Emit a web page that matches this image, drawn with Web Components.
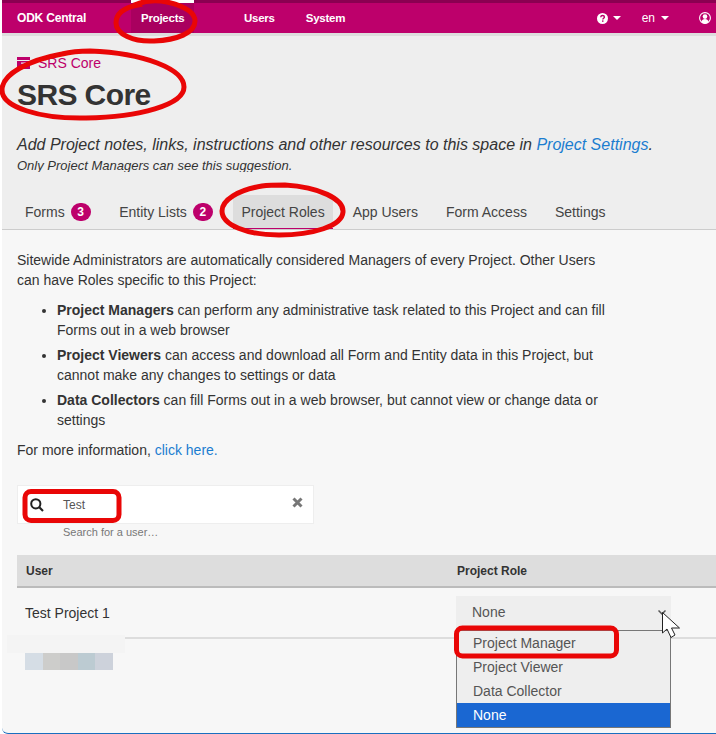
<!DOCTYPE html>
<html>
<head>
<meta charset="utf-8">
<title>ODK Central</title>
<style>
    html, body { margin: 0; padding: 0; background: #fff; }
    body {
        width: 716px;
        height: 734px;
        overflow: hidden;
        position: relative;
        font-family: "Liberation Sans", Arial, sans-serif;
        font-size: 14px;
        color: #333;
    }
    main-page { padding-left: 2px; }
</style>
</head>
<body>
<main-page>
    <odk-navbar></odk-navbar>
    <page-head title="SRS Core"></page-head>
    <tab-bar>
        <tab-item badge="3">Forms</tab-item>
        <tab-item badge="2">Entity Lists</tab-item>
        <tab-item active>Project Roles</tab-item>
        <tab-item>App Users</tab-item>
        <tab-item>Form Access</tab-item>
        <tab-item>Settings</tab-item>
    </tab-bar>
    <roles-panel></roles-panel>
</main-page>
<red-marks></red-marks>

<script>
class MainPage extends HTMLElement {
    constructor() {
        super()
        this.attachShadow({ mode: 'open' })
        this.shadowRoot.innerHTML = `
            <style>
                :host { display: flex; flex-direction: column; height: 734px; box-sizing: border-box; }
            </style>
            <slot></slot>`
    }
}

class OdkNavbar extends HTMLElement {
    constructor() {
        super()
        this.attachShadow({ mode: 'open' })
        const caret = `<svg class="caret" width="8" height="4" viewBox="0 0 8 4"><path d="M0 0h8L4 4z" fill="#fff"/></svg>`
        this.shadowRoot.innerHTML = `
            <style>
                :host { display: block; flex: none; border-top: 3px solid #8b0051; border-bottom: 3px solid #ddd; background: #bd006b; color: #fff; font-size: 12px; }
                nav { display: flex; align-items: stretch; height: 30px; }
                .brand { font-weight: bold; margin-left: 15px; width: 114px; line-height: 30px; letter-spacing: -.2px; }
                .item { font-weight: bold; font-size: 11.5px; letter-spacing: -.25px; line-height: 30px; padding: 0 10px; position: relative; }
                .current { background: #a9005f; width: 43px; margin-right: 40px; }
                .current::before { content: ""; position: absolute; left: 0; right: 0; top: -3px; height: 3px; background: #fff; }
                .users { margin-right: 11px; }
                .right { margin-left: auto; display: flex; align-items: center; padding-right: 5px; }
                .caret { margin-left: 5px; }
                .help { display: flex; align-items: center; }
                .lang { display: flex; align-items: center; margin-left: 21px; font-size: 12px; }
                .lang .caret { margin-left: 6px; }
                .user { margin-left: 30px; display: block; }
            </style>
            <nav>
                <span class="brand">ODK Central</span>
                <span class="item current">Projects</span>
                <span class="item users">Users</span>
                <span class="item">System</span>
                <div class="right">
                    <span class="help">
                        <svg width="11" height="11" viewBox="0 0 11 11"><circle cx="5.500" cy="5.500" r="5.500" fill="#fff"/><path d="M3.700 4.200c.1-1.100.9-1.700 1.900-1.700 1.100 0 1.800.7 1.800 1.500 0 1.300-1.500 1.200-1.500 2.400" fill="none" stroke="#bd006b" stroke-width="1.400"/><rect x="5" y="7.400" width="1.500" height="1.400" fill="#bd006b"/></svg>
                        ${caret}
                    </span>
                    <span class="lang">en ${caret}</span>
                    <svg class="user" width="12" height="12" viewBox="0 0 12 12"><circle cx="6" cy="6" r="5.400" fill="#bd006b" stroke="#fff" stroke-width="1.100"/><circle cx="6" cy="4.600" r="2.300" fill="#fff"/><path d="M2.300 10c.4-1.900 1.900-2.900 3.700-2.900s3.300 1 3.700 2.900a5 5 0 0 1-7.400 0z" fill="#fff"/></svg>
                </div>
            </nav>`
    }
}

class PageHead extends HTMLElement {
    constructor() {
        super()
        this.attachShadow({ mode: 'open' })
        const title = this.getAttribute('title')
        this.removeAttribute('title')
        this.shadowRoot.innerHTML = `
            <style>
                :host { display: block; flex: none; background: #eee; padding: 17px 15px 0; height: 136px; box-sizing: border-box; }
                .crumb { display: flex; align-items: center; color: #bd006b; font-size: 14px; line-height: 20px; }
                .crumb svg { margin-right: 8px; }
                h1 { margin: 5px 0 0; font-size: 30px; line-height: 33px; font-weight: bold; letter-spacing: -.6px; color: #333; }
                .note { margin: 23px 0 0; font-size: 16px; font-style: italic; line-height: 22px; }
                .note a { color: #1b7dd0; text-decoration: none; }
                .sub { margin: 1px 0 0; font-size: 13px; font-style: italic; line-height: 17px; }
            </style>
            <div class="crumb">
                <svg width="13" height="12" viewBox="0 0 13 12"><path d="M0 0h13v3H0zM0 4h13v8H0z" fill="#bd006b"/><rect x="4" y="5.500" width="5" height="1.200" fill="#eee"/></svg>
                ${title}
            </div>
            <h1>${title}</h1>
            <p class="note">Add Project notes, links, instructions and other resources to this space in <a href="#">Project Settings</a>.</p>
            <p class="sub">Only Project Managers can see this suggestion.</p>`
    }
}

class TabBar extends HTMLElement {
    constructor() {
        super()
        this.attachShadow({ mode: 'open' })
        this.shadowRoot.innerHTML = `
            <style>
                :host { display: flex; flex: none; gap: 12px; background: #eee; padding: 0 15px 0; height: 58px; box-sizing: border-box; align-items: flex-end; border-bottom: 1px solid #ccc; }
            </style>
            <slot></slot>`
    }
}

class TabItem extends HTMLElement {
    constructor() {
        super()
        this.attachShadow({ mode: 'open' })
        const badge = this.getAttribute('badge')
        this.shadowRoot.innerHTML = `
            <style>
                :host { display: flex; align-items: center; height: 34px; padding: 0 8px; box-sizing: border-box; font-size: 14px; color: #444; border-bottom: 1px solid transparent; }
                :host([active]) { background: #ddd; border-bottom-color: #bd006b; }
                .badge { display: inline-block; width: 20px; height: 18px; margin: 0 .5px 0 6px; border-radius: 10px; background: #bd006b; color: #fff; font-size: 12px; font-weight: bold; line-height: 18px; text-align: center; }
            </style>
            <slot></slot>${badge ? `<span class="badge">${badge}</span>` : ''}`
    }
}

class RolesPanel extends HTMLElement {
    constructor() {
        super()
        this.attachShadow({ mode: 'open' })
        this.shadowRoot.innerHTML = `
            <style>
                :host { display: block; flex: 1; background: #f7f7f7; padding: 20px 0 0 15px; box-sizing: border-box; border-bottom: 1px solid #1a6fbf; border-bottom-left-radius: 6px; line-height: 20px; }
                .copy { width: 592px; }
                p { margin: 0; }
                ul { margin: 10px 0; padding-left: 40px; }
                li { margin-bottom: 5px; }
                a { color: #1b7dd0; text-decoration: none; }
            </style>
            <div class="copy">
                <p>Sitewide Administrators are automatically considered Managers of every Project. Other Users can have Roles specific to this Project:</p>
                <ul>
                    <li><b>Project Managers</b> can perform any administrative task related to this Project and can fill Forms out in a web browser</li>
                    <li><b>Project Viewers</b> can access and download all Form and Entity data in this Project, but cannot make any changes to settings or data</li>
                    <li><b>Data Collectors</b> can fill Forms out in a web browser, but cannot view or change data or settings</li>
                </ul>
                <p>For more information, <a href="#">click here.</a></p>
            </div>
            <user-search value="Test" hint="Search for a user…"></user-search>
            <role-table></role-table>`
    }
}

class UserSearch extends HTMLElement {
    constructor() {
        super()
        this.attachShadow({ mode: 'open' })
        this.shadowRoot.innerHTML = `
            <style>
                :host { display: block; margin-top: 25px; width: 297px; }
                .box { display: flex; align-items: center; height: 39px; box-sizing: border-box; background: #fff; border: 1px solid #eee; padding: 0 10px 0 12px; }
                svg.glass { display: block; margin-top: 1px; }
                .value { margin-left: 19px; font-size: 12px; color: #555; flex: 1; }
                .hint { margin: 1px 0 0 46px; font-size: 11px; line-height: 14px; color: #777; }
                svg.clear { display: block; margin-top: -4px; }
            </style>
            <div class="box">
                <svg class="glass" width="14" height="14" viewBox="0 0 14 14"><circle cx="5.800" cy="5.800" r="4.600" fill="none" stroke="#222" stroke-width="2"/><path d="M9.300 9.300 13 13" stroke="#222" stroke-width="2.200"/></svg>
                <span class="value">${this.getAttribute('value')}</span>
                <svg class="clear" width="11" height="11" viewBox="0 0 11 11"><path d="M1.500 1.500l8 8M9.500 1.500l-8 8" stroke="#777" stroke-width="3"/></svg>
            </div>
            <div class="hint">${this.getAttribute('hint')}</div>`
    }
}

class RoleTable extends HTMLElement {
    constructor() {
        super()
        this.attachShadow({ mode: 'open' })
        this.shadowRoot.innerHTML = `
            <style>
                :host { display: block; margin-top: 16px; position: relative; }
                .row { display: grid; grid-template-columns: 431px 1fr; }
                .head { height: 33px; box-sizing: border-box; background: #ddd; border-bottom: 2px solid #bbb; align-items: center; font-size: 12px; font-weight: bold; padding-left: 9px; line-height: 30px; }
                .body { height: 51px; box-sizing: border-box; border-bottom: 2px solid #ddd; padding-left: 8px; align-items: center; font-size: 14px; }
                .patch { position: absolute; left: -10px; top: 80px; width: 118px; height: 18px; background: #f4f4f4; }
                .mosaic { display: flex; margin: 14px 0 0 8px; height: 17px; }
                .mosaic i { width: 17.600px; }
                role-select { align-self: start; margin-top: 8px; }
            </style>
            <div class="row head"><span>User</span><span>Project Role</span></div>
            <div class="row body">
                <span>Test Project 1</span>
                <role-select value="None">
                    <option>Project Manager</option>
                    <option>Project Viewer</option>
                    <option>Data Collector</option>
                    <option selected>None</option>
                </role-select>
            </div>
            <div class="patch"></div>
            <div class="mosaic">
                <i style="background:#d5dde5"></i><i style="background:#cdcdcb"></i><i style="background:#c8c8c8"></i><i style="background:#bccbd2"></i><i style="background:#cdd2db"></i>
            </div>`
    }
}

class RoleSelect extends HTMLElement {
    constructor() {
        super()
        this.attachShadow({ mode: 'open' })
        const options = [...this.querySelectorAll('option')].map(o =>
            `<div class="opt${o.hasAttribute('selected') ? ' sel' : ''}">${o.textContent}</div>`).join('')
        this.shadowRoot.innerHTML = `
            <style>
                :host { display: block; position: relative; width: 215px; height: 35px; box-sizing: border-box; background: #eee; border-bottom: 1px solid #1a6fbf; color: #555; font-size: 14px; line-height: 32px; padding-left: 16px; }
                svg { position: absolute; right: 5px; top: 14px; }
                .menu { position: absolute; z-index: 2; left: 0; top: 34px; width: 215px; box-sizing: border-box; background: #eee; border: 1px solid #777; }
                .opt { height: 24px; line-height: 24px; padding-left: 16px; color: #555; }
                .sel { background: #1a67d2; color: #fff; }
            </style>
            ${this.getAttribute('value')}
            <svg width="8" height="5" viewBox="0 0 8 5"><path d="M.5.500 4 4 7.500.500" fill="none" stroke="#555" stroke-width="1.500"/></svg>
            <div class="menu">${options}</div>`
    }
}

// red annotation strokes and the mouse pointer sit over the whole page
class RedMarks extends HTMLElement {
    constructor() {
        super()
        this.attachShadow({ mode: 'open' })
        this.shadowRoot.innerHTML = `
            <style>
                :host { display: block; position: absolute; left: 0; top: 0; width: 716px; height: 734px; pointer-events: none; z-index: 5; }
                svg { display: block; }
            </style>
            <svg width="716" height="734" viewBox="0 0 716 734">
                <g fill="none" stroke="#e90606" stroke-width="5">
                    <path d="M138 5C122 8 116 15 116 23c0 11 17 19 38 18 23-1 41-8 41-20 0-9-11-15-28-19-10-2-22-1-30 2z"/>
                    <path d="M62 54C29 60 2 74 2 90c0 17 37 29 84 28 53-1 98-13 98-31 0-18-40-34-94-36-10 0-20 1-28 3z"/>
                    <path d="M262 186c-24 4-40 14-40 25 0 14 25 24 57 24 34 0 63-9 64-23 1-13-24-25-58-27-8 0-16 0-23 1z"/>
                    <rect x="25" y="491.500" width="94" height="29" rx="6"/>
                    <rect x="456.500" y="628" width="160" height="28" rx="6"/>
                </g>
                <path d="M662.500 612.500V633l4.500-4 4 8.500 4-2.500-3.500-7h8z" fill="#fff" stroke="#222" stroke-width="1"/>
            </svg>`
    }
}

customElements.define('main-page', MainPage)
customElements.define('odk-navbar', OdkNavbar)
customElements.define('page-head', PageHead)
customElements.define('tab-bar', TabBar)
customElements.define('tab-item', TabItem)
customElements.define('role-select', RoleSelect)
customElements.define('role-table', RoleTable)
customElements.define('user-search', UserSearch)
customElements.define('roles-panel', RolesPanel)
customElements.define('red-marks', RedMarks)
</script>
</body>
</html>
